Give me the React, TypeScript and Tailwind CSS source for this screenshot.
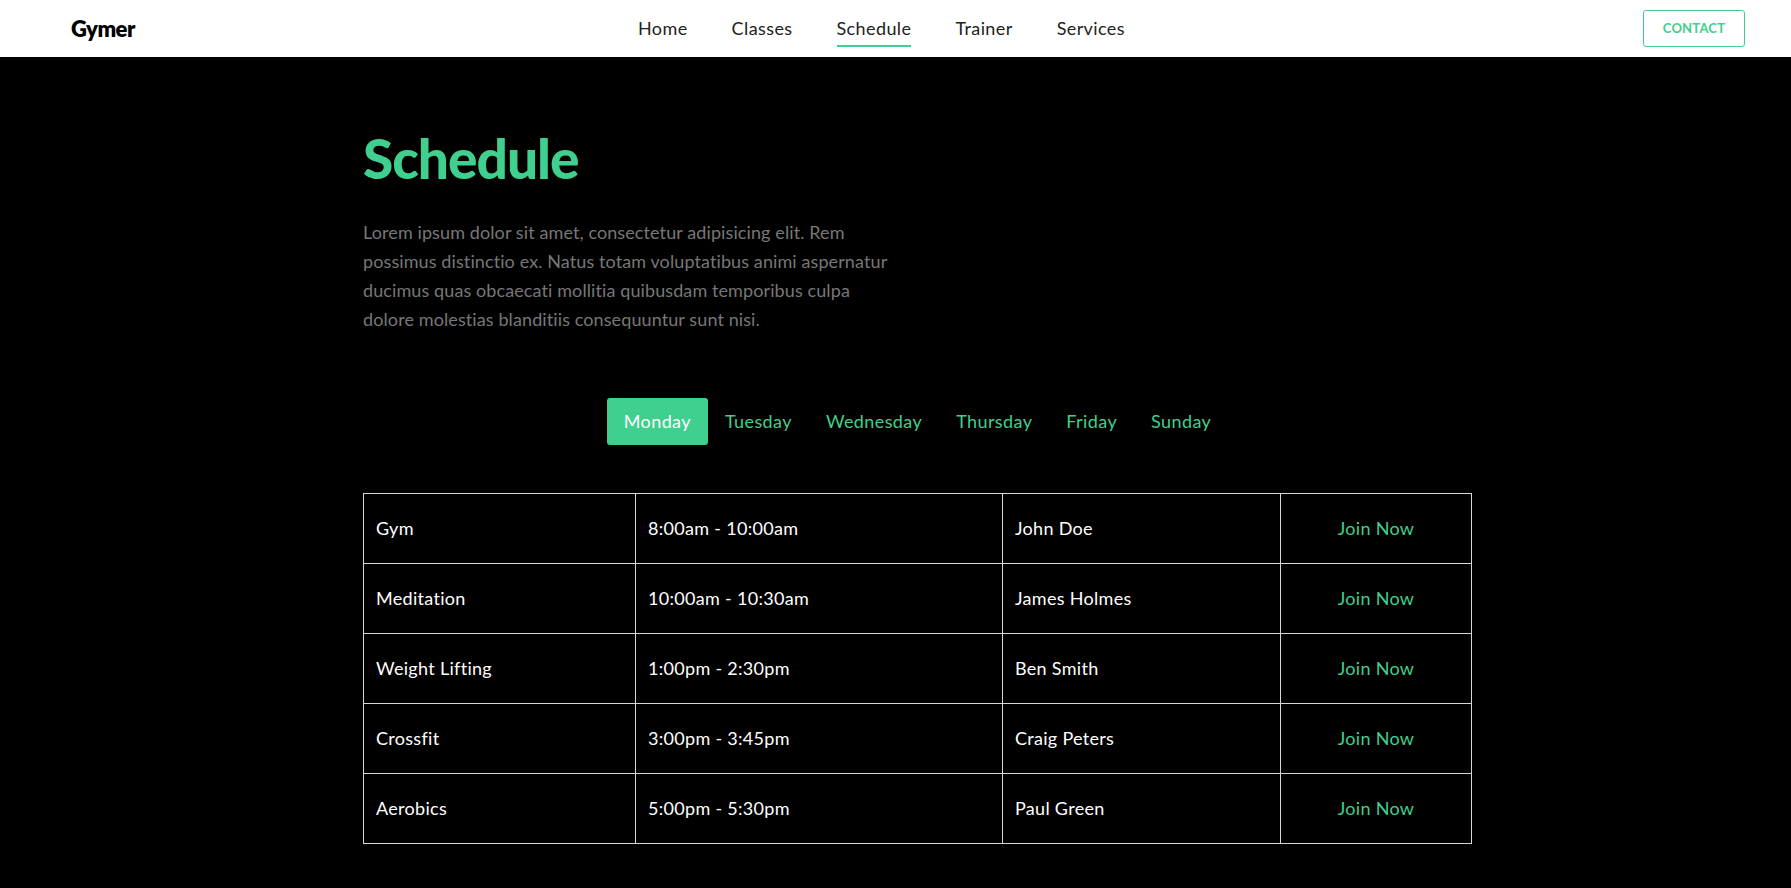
import clsx from "clsx";

const GREEN = "text-[#3fcf8e]";

const navItems = ["Home", "Classes", "Schedule", "Trainer", "Services"];
const days = ["Monday", "Tuesday", "Wednesday", "Thursday", "Friday", "Sunday"];

const rows = [
  { name: "Gym", time: "8:00am - 10:00am", trainer: "John Doe" },
  { name: "Meditation", time: "10:00am - 10:30am", trainer: "James Holmes" },
  { name: "Weight Lifting", time: "1:00pm - 2:30pm", trainer: "Ben Smith" },
  { name: "Crossfit", time: "3:00pm - 3:45pm", trainer: "Craig Peters" },
  { name: "Aerobics", time: "5:00pm - 5:30pm", trainer: "Paul Green" },
];

function Header() {
  return (
    <header className="h-[57px] bg-white flex items-center pl-[71px] pr-[46px]">
      <div className="w-[567px] text-[22px] font-extrabold text-black tracking-[-0.5px]">
        Gymer
      </div>
      <nav className="flex items-center gap-[44px] h-full">
        {navItems.map((item) => (
          <a
            key={item}
            href="#"
            className="relative h-full flex items-center text-[18px] tracking-[0.4px] text-[#222]"
          >
            {item}
            {item === "Schedule" && (
              <span className="absolute left-0 right-0 top-[45px] h-[2px] bg-[#3fcf8e]" />
            )}
          </a>
        ))}
      </nav>
      <div className="flex-1" />
      <button className="w-[102px] h-[37px] rounded-[3px] border border-[#3fcf8e] text-[#3fcf8e] text-[13px] font-bold tracking-[0.2px]">
        CONTACT
      </button>
    </header>
  );
}

export default function App() {
  return (
    <div className="min-h-[888px] bg-black font-['Lato','Liberation_Sans',sans-serif]">
      <Header />
      <main className="pl-[363px] pt-[68px]">
        <div className="w-[1109px]">
          <h1
            className={clsx(
              "text-[55px] font-black leading-[1.2] tracking-[-1px]",
              GREEN,
            )}
          >
            Schedule
          </h1>
          <p className="mt-[27px] w-[525px] text-[18px] leading-[29px] tracking-[0.1px] text-[#777]">
            Lorem ipsum dolor sit amet, consectetur adipisicing elit. Rem
            possimus distinctio ex. Natus totam voluptatibus animi aspernatur
            ducimus quas obcaecati mollitia quibusdam temporibus culpa dolore
            molestias blanditiis consequuntur sunt nisi.
          </p>

          <div className="mt-[64px] flex justify-center">
            {days.map((day, i) => (
              <button
                key={day}
                className={clsx(
                  "h-[47px] px-[17px] text-[18px] tracking-[0.4px] rounded-[3px]",
                  i === 0 ? "bg-[#3fcf8e] text-white" : GREEN,
                )}
              >
                {day}
              </button>
            ))}
          </div>

          <table className="mt-[48px] w-[1109px] border-collapse text-[18px] tracking-[0.3px] text-white">
            <tbody>
              {rows.map((r) => (
                <tr key={r.name} className="h-[70px]">
                  <td className="w-[272px] border border-[#d8d8d8] px-[12px]">{r.name}</td>
                  <td className="w-[367px] border border-[#d8d8d8] px-[12px]">{r.time}</td>
                  <td className="w-[278px] border border-[#d8d8d8] px-[12px]">{r.trainer}</td>
                  <td className={clsx("border border-[#d8d8d8] text-center", GREEN)}>
                    <a href="#">Join Now</a>
                  </td>
                </tr>
              ))}
            </tbody>
          </table>
        </div>
      </main>
    </div>
  );
}
